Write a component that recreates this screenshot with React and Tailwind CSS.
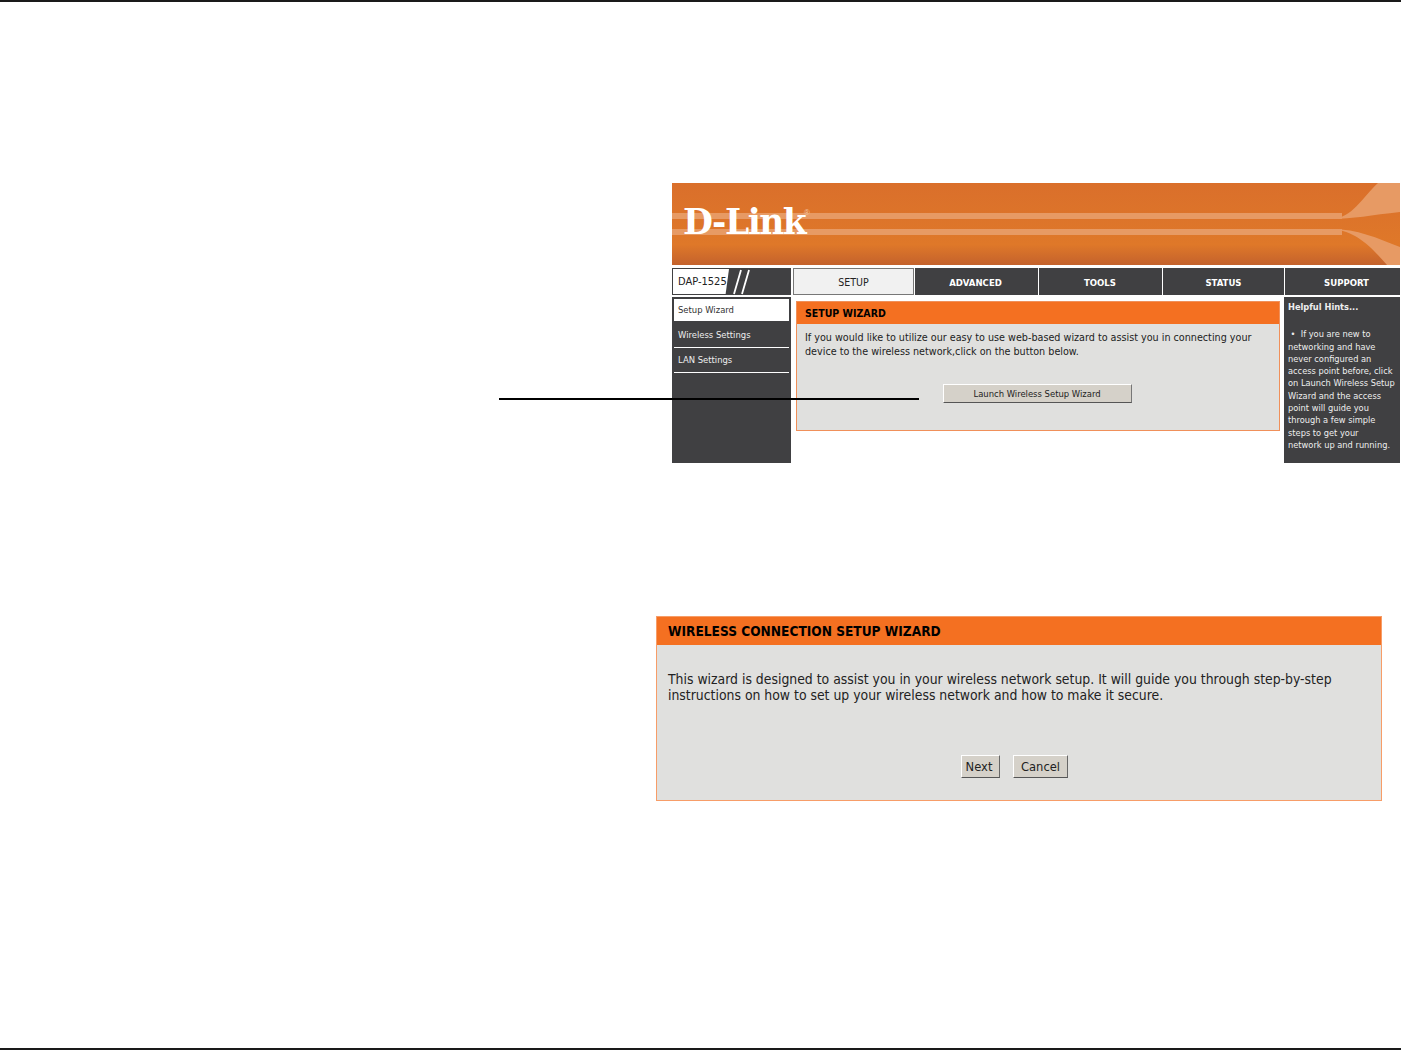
const tabs = [
  { label: 'ADVANCED', width: 'w-[124px] pr-[2px]' },
  { label: 'TOOLS', width: 'w-[124px] pr-px' },
  { label: 'STATUS', width: 'w-[122px]' },
  { label: 'SUPPORT', width: 'w-[116px] pl-[8px]' },
];

const hints = [
  'networking and have',
  'never configured an',
  'access point before, click',
  'on Launch Wireless Setup',
  'Wizard and the access',
  'point will guide you',
  'through a few simple',
  'steps to get your',
  'network up and running.',
];

function Banner() {
  return (
    <div className="relative h-[82px] w-full overflow-hidden bg-gradient-to-b from-[#da6f2b] via-[#df7829] via-75% to-[#c4622c]">
      <svg className="absolute inset-0 h-full w-full" viewBox="0 0 728 82" preserveAspectRatio="none">
        <rect x="0" y="30" width="670" height="6" fill="#e79a64" />
        <rect x="0" y="46" width="670" height="6" fill="#e79a64" />
        <path d="M660 36 C680 35 690 15 706 0 L728 0 L728 29 C700 32 680 36 660 36 Z" fill="#e79a64" />
        <path d="M660 46 C685 48 700 65 715 82 L728 82 L728 64 C705 55 685 46 660 46 Z" fill="#e79a64" />
      </svg>
      <span className="absolute left-[11px] top-[19px] font-['DejaVu_Serif',serif] text-[34.5px] leading-[40px] font-bold tracking-[-1.5px] text-white">
        D-Link
      </span>
      <span className="absolute left-[132px] top-[26px] font-['Liberation_Sans',sans-serif] text-[8px] leading-[8px] text-[#f3c9a8]">
        ®
      </span>
    </div>
  );
}

function NavBar() {
  return (
    <div className="mt-[3px] flex h-[27px] text-[9.5px] font-bold text-white">
      <div className="flex w-[119px] bg-[#404042]">
        <div className="m-px flex h-[25px] w-[56px] items-center bg-white pt-[2px] pl-[5px] text-[11px] font-normal whitespace-nowrap text-[#222] [clip-path:polygon(0_0,100%_0,94%_100%,0_100%)]">
          DAP-1525
        </div>
        <svg className="h-[27px] w-[24px]" viewBox="0 0 24 27">
          <path d="M4 26 L11 2 M12 26 L19 2" stroke="#fff" strokeWidth="1.8" fill="none" />
        </svg>
      </div>
      <div className="ml-[2px] flex w-[121px] items-center justify-center border border-[#777] bg-[#f1f1f1] pt-[2px] text-[10.5px] font-normal text-[#222]">
        SETUP
      </div>
      {tabs.map((tab) => (
        <div key={tab.label} className={`flex items-center justify-center border-l border-white bg-[#404042] pt-[3px] ${tab.width}`}>
          {tab.label}
        </div>
      ))}
    </div>
  );
}

function Sidebar() {
  return (
    <div className="h-[166px] w-[119px] bg-[#404042] px-[2px] pt-[2px] text-[9.4px] text-[#eee]">
      <div className="flex h-[22px] items-center bg-white pt-[1px] pl-[4px] text-[#333]">Setup Wizard</div>
      <div className="flex h-[27px] items-center border-b border-white pt-[3px] pl-[4px]">Wireless Settings</div>
      <div className="flex h-[25px] items-center border-b border-white pl-[4px]">LAN Settings</div>
    </div>
  );
}

function SetupPanel() {
  return (
    <div className="mt-[4px] ml-[5px] h-[130px] w-[484px] border border-[#f0905a] bg-[#e0e0de]">
      <div className="flex h-[22px] items-center bg-[#f47021] pt-[2px] pl-[8px] text-[10.5px] font-bold text-black">SETUP WIZARD</div>
      <div className="pl-[8px] pt-[7px] text-[10.7px] leading-[14px] whitespace-nowrap text-[#222]">
        <div>If you would like to utilize our easy to use web-based wizard to assist you in connecting your</div>
        <div>device to the wireless network,click on the button below.</div>
      </div>
      <div className="mt-[25px] flex justify-center pr-[2px]">
        <button className="h-[19px] w-[189px] border border-t-white border-l-white border-b-[#555] border-r-[#777] bg-[#d5d1c9] pt-px text-[9.4px] text-[#222]">
          Launch Wireless Setup Wizard
        </button>
      </div>
    </div>
  );
}

function HintsPanel() {
  return (
    <div className="ml-[4px] h-[166px] w-[116px] bg-[#404042] pl-[4px] pt-[4px] text-[9.2px] leading-[12.3px] whitespace-nowrap text-[#eee]">
      <div className="font-bold">Helpful Hints...</div>
      <div className="mt-[15px] whitespace-pre">{' \u2022  If you are new to'}</div>
      {hints.map((line) => (
        <div key={line}>{line}</div>
      ))}
    </div>
  );
}

function WizardDialog() {
  return (
    <div className="mt-[153px] ml-[656px] h-[185px] w-[726px] border border-[#f79d68] bg-[#e0e0de]">
      <div className="flex h-[28px] items-center bg-[#f47021] pl-[11px] text-[13.6px] font-bold text-black">
        WIRELESS CONNECTION SETUP WIZARD
      </div>
      <div className="pl-[11px] pt-[26px] text-[13.85px] leading-[16px] whitespace-nowrap text-[#222]">
        <div>This wizard is designed to assist you in your wireless network setup. It will guide you through step-by-step</div>
        <div>instructions on how to set up your wireless network and how to make it secure.</div>
      </div>
      <div className="mt-[52px] flex gap-[13px] pl-[304px] text-[12.8px] text-[#222]">
        <button className="h-[23px] w-[39px] border border-t-white border-l-white border-b-[#555] border-r-[#666] bg-[#d5d1c9] pr-[3px]">Next</button>
        <button className="h-[23px] w-[55px] border border-t-white border-l-white border-b-[#555] border-r-[#666] bg-[#d5d1c9]">Cancel</button>
      </div>
    </div>
  );
}

export default function App() {
  return (
    <div className="relative flex h-[1051px] flex-col bg-white font-['DejaVu_Sans_Condensed','DejaVu_Sans',sans-serif]">
      <div className="h-[2px] bg-[#1a1a1a]" />
      <div className="mt-[181px] ml-[672px] w-[728px]">
        <Banner />
        <NavBar />
        <div className="mt-[2px] flex">
          <Sidebar />
          <SetupPanel />
          <HintsPanel />
        </div>
      </div>
      <WizardDialog />
      <div className="mt-auto mb-px h-[2px] bg-[#1a1a1a]" />
      {/* callout line from the manual page, sits over the screenshot */}
      <div className="absolute left-[499px] top-[398px] h-[2px] w-[420px] bg-black" />
    </div>
  );
}
